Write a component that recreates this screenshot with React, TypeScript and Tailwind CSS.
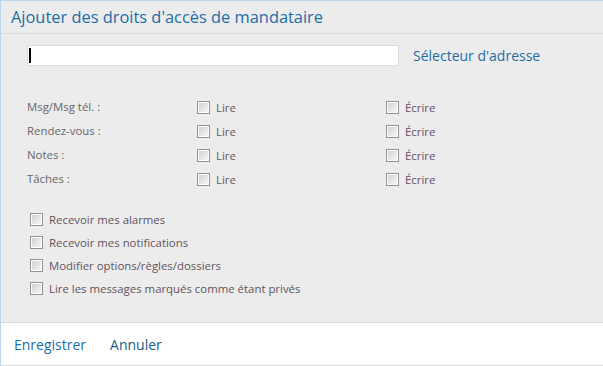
const rows = ['Msg/Msg tél. :', 'Rendez-vous :', 'Notes :', 'Tâches :'];
const extras = [
  'Recevoir mes alarmes',
  'Recevoir mes notifications',
  'Modifier options/règles/dossiers',
  'Lire les messages marqués comme étant privés',
];

function Box() {
  return (
    <span className="flex h-[13px] w-[13px] shrink-0 items-center justify-center border border-[#939393] bg-white">
      <span className="h-[9px] w-[9px] bg-gradient-to-br from-[#cfd0d2] to-[#f7f7f7]" />
    </span>
  );
}

function Check({ label, color }: { label: string; color: string }) {
  return (
    <label className="flex items-center gap-[6px]">
      <Box />
      <span className={`${color} pt-[2px] leading-[16px]`}>{label}</span>
    </label>
  );
}

export default function App() {
  return (
    <div
      className="flex h-[366px] w-[603px] flex-col border-t border-l border-[#b9d5f0] bg-[#ececec]"
      style={{ fontFamily: "'Open Sans', 'Noto Sans', sans-serif" }}
    >
      {/* header */}
      <div className="h-[33px] border-b border-[#dadada] pl-[10px] pt-[6px] text-[16.4px] leading-[20px] text-[#1c6ea8]">
        Ajouter des droits d'accès de mandataire
      </div>

      {/* address */}
      <div className="flex items-center pl-[26px] pt-[11px]">
        <div className="flex h-[21px] w-[372px] items-center border border-[#dcdcdc] bg-white pl-[1px]">
          <span className="h-[15px] w-[2px] bg-black" />
        </div>
        <span className="ml-[14px] text-[14px] text-[#1c6ea8]">Sélecteur d'adresse</span>
      </div>

      {/* permissions */}
      <div className="mt-[32px] flex flex-col gap-[6px] pl-[26px] text-[11.4px] leading-[18px]">
        {rows.map((r) => (
          <div key={r} className="grid grid-cols-[170px_189px_1fr] items-center">
            <span className="text-[#666]">{r}</span>
            <Check label="Lire" color="text-[#5e5a66]" />
            <Check label="Écrire" color="text-[#6a5060]" />
          </div>
        ))}
      </div>

      {/* extras */}
      <div className="mt-[22px] flex flex-col gap-[5px] pl-[29px] text-[11.4px] leading-[18px]">
        {extras.map((e) => (
          <Check key={e} label={e} color="text-[#64525e]" />
        ))}
      </div>

      {/* footer */}
      <div className="mt-auto flex h-[44px] items-center gap-[24px] border-t border-b border-[#dadada] bg-white pl-[13px] text-[14px]">
        <span className="text-[#1c6ea8]">Enregistrer</span>
        <span className="text-[#1f5a8a]">Annuler</span>
      </div>
    </div>
  );
}
